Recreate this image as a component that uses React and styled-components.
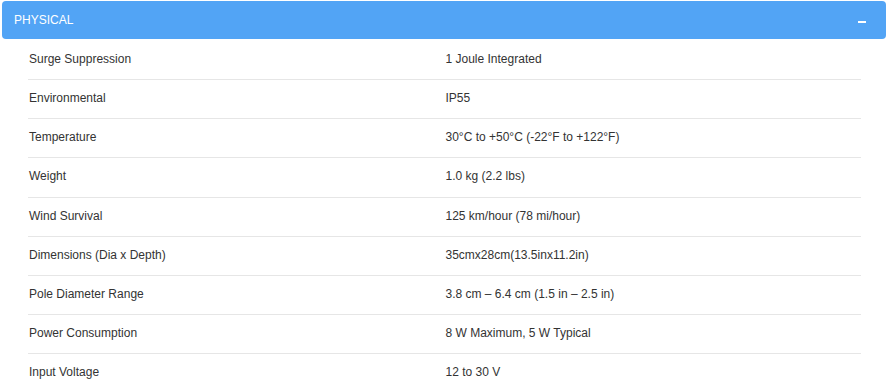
import React from 'react';
import styled, { createGlobalStyle } from 'styled-components';

const GlobalStyle = createGlobalStyle`
  html, body {
    margin: 0;
    padding: 0;
    background: #fff;
    font-family: "Liberation Sans", Arial, sans-serif;
  }
`;

const Panel = styled.section`
  padding: 1px 3px 0 2px;
`;

const PanelHeader = styled.header`
  display: flex;
  align-items: center;
  justify-content: space-between;
  height: 38px;
  padding: 0 20px 0 12px;
  background: #52a4f5;
  border-radius: 4px;
  color: #fff;
  font-size: 12px;
  text-transform: uppercase;
`;

const Toggle = styled.span`
  display: block;
  width: 8px;
  height: 2px;
  margin-top: 3px;
  background: #fff;
`;

const SpecTable = styled.div`
  margin: 1px 25px 0 26px;
`;

const SpecRow = styled.div`
  display: grid;
  grid-template-columns: 1fr 1fr;
  padding: 10px 0 11px;
  border-top: 1px solid ${(props) => (props.first ? 'transparent' : '#e6e6e6')};
  font-size: 12px;
  line-height: 17.14px;
  color: #333;
`;

const Cell = styled.div`
  padding-left: 1px;
`;

const specs = [
  ['Surge Suppression', '1 Joule Integrated'],
  ['Environmental', 'IP55'],
  ['Temperature', '30°C to +50°C (-22°F to +122°F)'],
  ['Weight', '1.0 kg (2.2 lbs)'],
  ['Wind Survival', '125 km/hour (78 mi/hour)'],
  ['Dimensions (Dia x Depth)', '35cmx28cm(13.5inx11.2in)'],
  ['Pole Diameter Range', '3.8 cm – 6.4 cm (1.5 in – 2.5 in)'],
  ['Power Consumption', '8 W Maximum, 5 W Typical'],
  ['Input Voltage', '12 to 30 V'],
];

export default function App() {
  return (
    <>
      <GlobalStyle />
      <Panel>
        <PanelHeader>
          <span>Physical</span>
          <Toggle />
        </PanelHeader>
        <SpecTable>
          {specs.map(([label, value], i) => (
            <SpecRow key={label} first={i === 0}>
              <Cell>{label}</Cell>
              <Cell>{value}</Cell>
            </SpecRow>
          ))}
        </SpecTable>
      </Panel>
    </>
  );
}
